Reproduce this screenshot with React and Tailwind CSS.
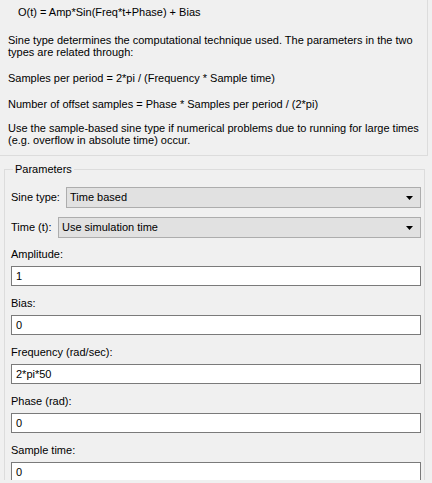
import React from "react";

const params = [
  { label: "Amplitude:", value: "1" },
  { label: "Bias:", value: "0" },
  { label: "Frequency (rad/sec):", value: "2*pi*50" },
  { label: "Phase (rad):", value: "0" },
  { label: "Sample time:", value: "0" },
];

const Arrow = () => (
  <svg width="7" height="4" viewBox="0 0 7 4" className="mr-[7px]">
    <path d="M0 0 H7 L3.5 4 Z" fill="#000" />
  </svg>
);

const Select = ({ value, width }) => (
  <div
    className={`flex h-[21px] items-center justify-between border border-[#adadad] bg-[#e1e1e1] pl-[3px] ${width}`}
  >
    <span>{value}</span>
    <Arrow />
  </div>
);

export default function App() {
  return (
    <div className="h-[483px] w-[432px] bg-[#f0f0f0] font-['Liberation_Sans',Arial,sans-serif] text-[11px] leading-[13px] text-black">
      <div className="h-[480px] overflow-hidden">
        {/* description */}
        <div className="h-[156px] w-[428px] border-r border-b border-[#dcdcdc] pl-[8px] pt-[6px] leading-[12px]">
          <p className="pl-[10px]">O(t) = Amp*Sin(Freq*t+Phase) + Bias</p>
          <p className="mt-[16px]">
            Sine type determines the computational technique used. The parameters in the two
            <br />
            types are related through:
          </p>
          <p className="mt-[14px]">Samples per period = 2*pi / (Frequency * Sample time)</p>
          <p className="mt-[14px]">Number of offset samples = Phase * Samples per period / (2*pi)</p>
          <p className="mt-[12px]">
            Use the sample-based sine type if numerical problems due to running for large times
            <br />
            (e.g. overflow in absolute time) occur.
          </p>
        </div>

        {/* parameters group */}
        <fieldset className="mt-[7px] ml-[4px] w-[421px] border border-[#dcdcdc] pr-[3px] pl-[6px]">
          <legend className="ml-[2px] px-[2px]">Parameters</legend>
          <div className="mt-[11px] flex items-center justify-between">
            <span>Sine type:</span>
            <Select value="Time based" width="w-[355px]" />
          </div>
          <div className="mt-[9px] flex items-center justify-between">
            <span>Time (t):</span>
            <Select value="Use simulation time" width="w-[363px]" />
          </div>
          {params.map((p, i) => (
            <div key={p.label} className={i === 0 ? "mt-[10px]" : "mt-[11px]"}>
              <div className="h-[13px]">{p.label}</div>
              <div className="mt-[5px] flex h-[20px] w-[410px] items-center border border-[#7a7a7a] bg-white pl-[4px]">
                {p.value}
              </div>
            </div>
          ))}
        </fieldset>
      </div>
    </div>
  );
}
